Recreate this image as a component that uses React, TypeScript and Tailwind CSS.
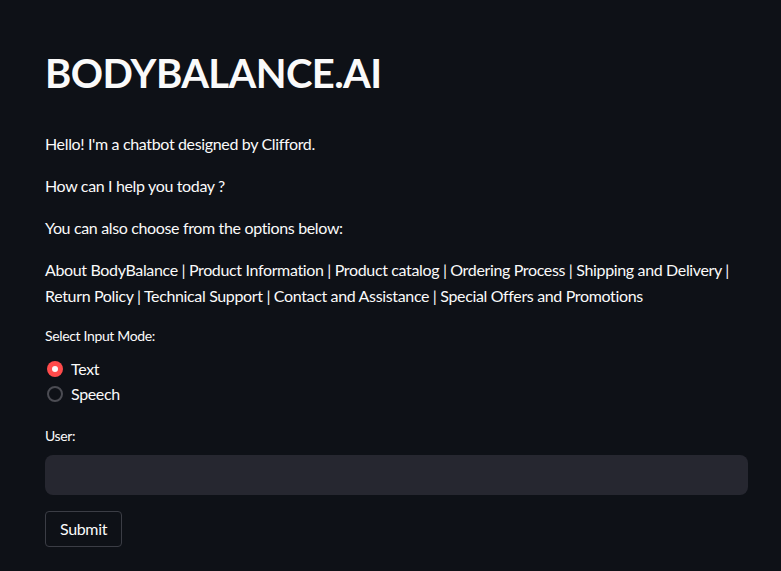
import { useState } from 'react';

const options = [
  'About BodyBalance',
  'Product Information',
  'Product catalog',
  'Ordering Process',
  'Shipping and Delivery',
  'Return Policy',
  'Technical Support',
  'Contact and Assistance',
  'Special Offers and Promotions',
];

export default function App() {
  const [mode, setMode] = useState('Text');
  const [text, setText] = useState('');

  return (
    <div className="min-h-[571px] w-full bg-[#0e1117] text-[#fafafa] font-['Lato','Liberation_Sans',sans-serif] tracking-[-0.35px]">
      <div className="w-[703px] ml-[45px] pt-[47px] pb-6">
        {/* Title */}
        <h1 className="text-[40px] leading-[53px] font-bold tracking-[-0.6px]">BODYBALANCE.AI</h1>

        {/* Intro */}
        <div className="mt-[31px] text-base leading-[25.6px] space-y-[16.4px]">
          <p>Hello! I'm a chatbot designed by Clifford.</p>
          <p>How can I help you today ?</p>
          <p>You can also choose from the options below:</p>
          <p>{options.join(' | ')}</p>
        </div>

        {/* Input mode */}
        <div className="mt-[17px] text-sm leading-[21px]">Select Input Mode:</div>
        <div className="mt-[10px] flex flex-col">
          {['Text', 'Speech'].map((m) => (
            <label key={m} className="flex items-center h-[25px] cursor-pointer" onClick={() => setMode(m)}>
              {mode === m ? (
                <span className="w-4 h-4 ml-[2px] rounded-full bg-[#ff4b4b] flex items-center justify-center">
                  <span className="w-[6px] h-[6px] rounded-full bg-[#fafafa]" />
                </span>
              ) : (
                <span className="w-4 h-4 ml-[2px] rounded-full border-2 border-[#4b4c53]" />
              )}
              <span className="ml-[8px] text-base">{m}</span>
            </label>
          ))}
        </div>

        {/* User input */}
        <div className="mt-[19px] text-sm leading-[21px]">User:</div>
        <input
          value={text}
          onChange={(e) => setText(e.target.value)}
          className="mt-[9px] w-full h-10 rounded-lg bg-[#262730] px-3 text-base outline-none"
        />

        <button className="mt-[16px] h-[36px] px-[14px] rounded-[4px] border border-[#3b3d45] bg-[#0e1117] text-base">
          Submit
        </button>
      </div>
    </div>
  );
}
